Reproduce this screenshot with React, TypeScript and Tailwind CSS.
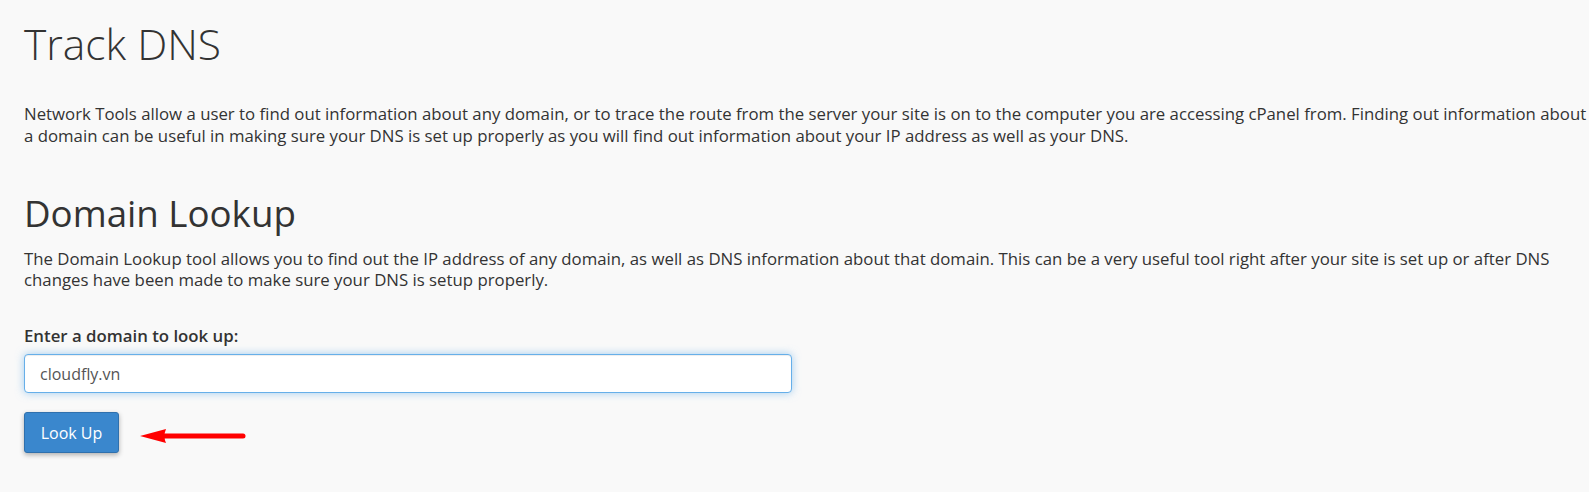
import { useState } from "react";

export default function App() {
  const [domain, setDomain] = useState("cloudfly.vn");

  return (
    <div className="min-h-[492px] bg-[#f9f9f9] pl-[24px] text-[#333] font-['Open_Sans',sans-serif]">
      <h1 className="pt-[21px] text-[42.5px] font-light leading-[46px] text-[#333]">Track DNS</h1>

      <p className="mt-[36px] text-[16.8px] leading-[22px]">
        Network Tools allow a user to find out information about any domain, or to trace the route from the server your site is on to the computer you are accessing cPanel from. Finding out information about a domain can be useful in making sure your DNS is set up properly as you will find out information about your IP address as well as your DNS.
      </p>

      <h2 className="mt-[46px] text-[36.7px] font-normal leading-[40px]">Domain Lookup</h2>
      <p className="mt-[15px] text-[16.8px] leading-[21px]">
        The Domain Lookup tool allows you to find out the IP address of any domain, as well as DNS information about that domain. This can be a very useful tool right after your site is set up or after DNS changes have been made to make sure your DNS is setup properly.
      </p>

      <form className="mt-[35px]" onSubmit={(e) => e.preventDefault()}>
        <label htmlFor="domain" className="block text-[16.8px] font-semibold leading-[22px]">
          Enter a domain to look up:
        </label>
        <input
          id="domain"
          value={domain}
          onChange={(e) => setDomain(e.target.value)}
          className="mt-[7px] block h-[39px] w-[768px] rounded-[4px] border border-[#66afe9] bg-white px-[15px] text-[16px] text-[#555] outline-none shadow-[inset_0_1px_1px_rgba(0,0,0,0.075),0_0_8px_rgba(102,175,233,0.6)]"
        />
        <div className="mt-[19px] flex items-center gap-[21px]">
          <button
            type="submit"
            className="h-[41px] w-[95px] rounded-[3px] border border-[#2f70ad] bg-[#3a87cd] text-[16px] text-white shadow-[0_2px_5px_rgba(0,0,0,0.3)]"
          >
            Look Up
          </button>
          <svg width="106" height="16" viewBox="0 0 106 16" className="mt-[6px]">
            <path d="M0 8 L26 1 Q23 8 26 15 Z" fill="#f00" />
            <line x1="24" y1="8" x2="103" y2="8" stroke="#f00" strokeWidth="5" strokeLinecap="round" />
          </svg>
        </div>
      </form>
    </div>
  );
}
